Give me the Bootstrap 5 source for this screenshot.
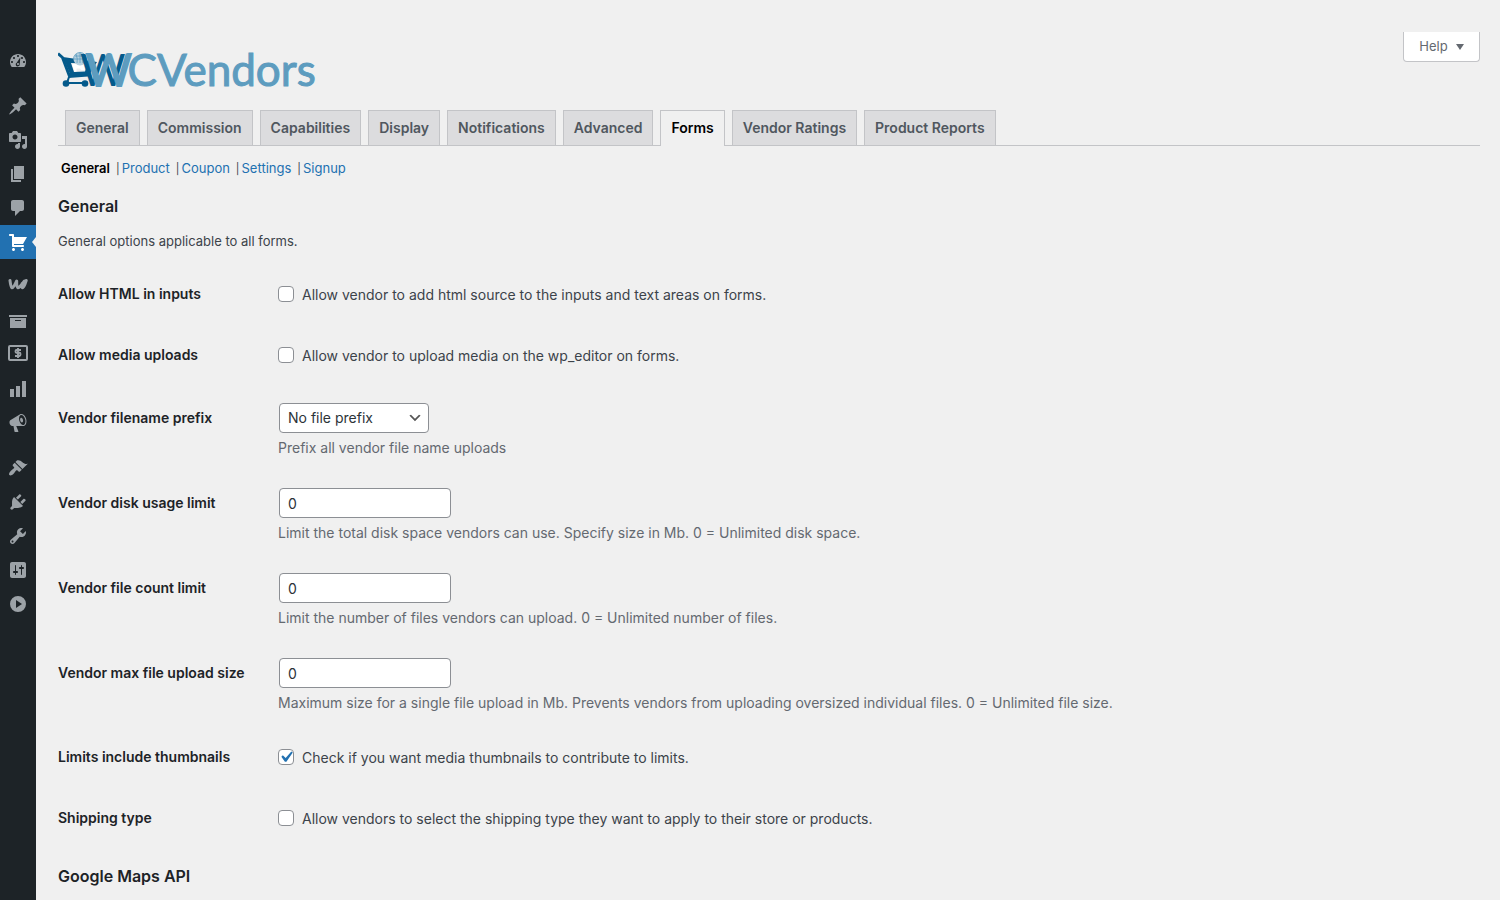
<!DOCTYPE html>
<html lang="en">
<head>
<meta charset="utf-8">
<meta name="viewport" content="width=device-width, initial-scale=1">
<title>WC Vendors Settings</title>
<link href="https://cdn.jsdelivr.net/npm/bootstrap@5.3.0/dist/css/bootstrap.min.css" rel="stylesheet">
<style>
body{background:#f0f0f0;color:#3c434a;font-family:Inter,"Liberation Sans",sans-serif;font-size:14px;line-height:20px}
a{color:#2271b1}
.admin-menu{width:36px;background:#1d2327;padding-top:44px}
.admin-menu a{height:34px;color:#9ca2a7;padding-right:1px}
.admin-menu a.active{background:#2271b1;color:#fff}
.admin-menu a.active::after{content:"";position:absolute;right:0;top:12px;border:5px solid transparent;border-left-width:0;border-right:4px solid #f0f0f0}
.admin-menu svg{width:20px;height:20px;fill:currentColor}
.menu-gap{margin-top:11px}
.page-body{padding:32px 20px 0 22px}
.help-tab{height:30px;width:77px;background:#fff;border:1px solid #c3c4c7;border-top:0;border-radius:0 0 4px 4px;color:#646970;font-size:13px;padding:0}
.brand-logo{margin-top:10px;font-family:Lato,sans-serif;font-size:44px;line-height:54px;color:#5d9cbf;-webkit-text-stroke:1px #5d9cbf}
.brand-logo svg{width:42px;height:40px;margin:8px -14px 0 0}
.brand-logo .brand-w{margin-right:-4px;-webkit-text-stroke-width:2px;text-shadow:-6px 0 #045a8b}
.settings-tabs{border-bottom:1px solid #c3c4c7;padding-left:7px;gap:7px;margin-top:14px}
.settings-tabs .nav-link{border:1px solid #c3c4c7;border-bottom:0;border-radius:0;background:#dcdcde;color:#50575e;font-weight:600;font-size:14px;line-height:24px;height:35px;padding:5px 10px}
.settings-tabs .nav-link.active{background:#f0f0f0;color:#000;height:36px;margin-bottom:-1px}
.sub-links{font-size:13px;margin-top:12px;padding-left:3px;gap:6px}
.sub-links a{text-decoration:none}
.sub-links .current{color:#000;font-weight:600}
.sub-links .divider{font-size:11px;margin-right:2px}
.section-title{font-size:16px;line-height:22px;font-weight:600;color:#1d2327;margin:16px 0 0}
.intro{font-size:13px;margin:14px 0 0}
.form-rows{margin-top:13px}
.form-row{display:grid;grid-template-columns:220px 1fr;align-items:start}
.form-row > :first-child{font-weight:600;color:#1d2327}
.check-row{height:61px;padding-top:20px}
.check-row label{padding-top:1px}
.field-group{padding-bottom:1px}
.field-row{height:85px;padding-top:17px}
.field-row > :first-child{padding-top:5px}
.form-check-input.wp-check{width:16px;height:16px;margin:2px 0 0;border:1px solid #8c8f94;border-radius:4px;background-color:#fff;float:none}
.form-check-input.wp-check:checked{background-color:#fff;border-color:#8c8f94;background-image:url("data:image/svg+xml,%3Csvg xmlns='http://www.w3.org/2000/svg' viewBox='0 0 20 20'%3E%3Cpath d='M14.83 4.89l1.34.94-5.81 8.38H9.02L5.78 9.67l1.34-1.25 2.57 2.4z' fill='%232271b1'/%3E%3C/svg%3E");background-size:22px;background-position:center}
.wp-field{width:172px;height:30px;margin-left:1px;padding:0 8px;border:1px solid #8c8f94;border-radius:4px;background-color:#fff;color:#2c3338;font-size:14px;line-height:28px}
select.wp-field{width:150px;background-position:right 5px center;background-size:16px;background-image:url("data:image/svg+xml,%3Csvg xmlns='http://www.w3.org/2000/svg' viewBox='0 0 20 20'%3E%3Cpath d='M5 6l5 5 5-5 2 1-7 7-7-7 2-1z' fill='%23555'/%3E%3C/svg%3E")}
.hint{color:#646970;margin:5px 0 0}
</style>
</head>
<body>
<div class="d-flex min-vh-100">
<nav class="admin-menu flex-shrink-0" aria-label="Admin">
<a href="#" class="d-flex align-items-center justify-content-center" aria-label="Dashboard"><svg viewBox="0 0 20 20"><path d="M3.76 16h12.48c1.1-1.37 1.76-3.11 1.76-5 0-4.42-3.58-8-8-8s-8 3.58-8 8c0 1.89.66 3.63 1.76 5zM10 4c.55 0 1 .45 1 1s-.45 1-1 1-1-.45-1-1 .45-1 1-1zM6 6c.55 0 1 .45 1 1s-.45 1-1 1-1-.45-1-1 .45-1 1-1zm8 0c.55 0 1 .45 1 1s-.45 1-1 1-1-.45-1-1 .45-1 1-1zM12.400 6.300L11.700 13.200A2 2 0 1 1 8.700 11.700zM4 10c.55 0 1 .45 1 1s-.45 1-1 1-1-.45-1-1 .45-1 1-1zm12 0c.55 0 1 .45 1 1s-.45 1-1 1-1-.45-1-1 .45-1 1-1zm-5 3c0-.55-.45-1-1-1s-1 .45-1 1 .45 1 1 1 1-.45 1-1z" fill-rule="evenodd"/></svg></a>
<a href="#" class="menu-gap d-flex align-items-center justify-content-center" aria-label="Posts"><svg viewBox="0 0 20 20"><path d="M10.44 3.02l1.82-1.82 6.36 6.35-1.83 1.82c-1.05-.68-2.48-.57-3.41.36l-.75.75c-.92.93-1.04 2.35-.35 3.41l-1.83 1.82-2.41-2.41-2.8 2.79c-.42.42-3.38 2.71-3.8 2.29s1.86-3.39 2.28-3.81l2.79-2.79L4.1 9.36l1.83-1.82c1.05.69 2.48.57 3.4-.36l.75-.75c.93-.92 1.05-2.35.36-3.41z"/></svg></a>
<a href="#" class="d-flex align-items-center justify-content-center" aria-label="Media"><svg viewBox="0 0 20 20"><path d="M13 11V4c0-.55-.45-1-1-1h-1.67L9 1H5L3.67 3H2c-.55 0-1 .45-1 1v7c0 .55.45 1 1 1h10c.55 0 1-.45 1-1zM7 4.5c1.38 0 2.5 1.12 2.5 2.5S8.38 9.5 7 9.5 4.5 8.38 4.5 7 5.62 4.5 7 4.5zM14 6h5v10.5c0 1.38-1.12 2.5-2.5 2.5S14 17.88 14 16.5s1.12-2.5 2.5-2.5c.17 0 .34.02.5.05V9h-3V6zm-4 8.05V13h2v3.5c0 1.38-1.12 2.5-2.5 2.5S7 17.88 7 16.5 8.12 14 9.5 14c.17 0 .34.02.5.05z" fill-rule="evenodd"/></svg></a>
<a href="#" class="d-flex align-items-center justify-content-center" aria-label="Pages"><svg viewBox="0 0 20 20"><path d="M6 15V2h10v13H6zm-1 1h8v2H3V5h2v11z"/></svg></a>
<a href="#" class="d-flex align-items-center justify-content-center" aria-label="Comments"><svg viewBox="0 0 20 20"><path d="M5 2h9c1.1 0 2 .9 2 2v7c0 1.1-.9 2-2 2h-2l-5 5v-5H5c-1.1 0-2-.9-2-2V4c0-1.1.9-2 2-2z"/></svg></a>
<a href="#" class="active position-relative d-flex align-items-center justify-content-center" aria-label="WC Vendors"><svg viewBox="0 0 20 20"><path d="M6 13h9c.55 0 1 .45 1 1s-.45 1-1 1H5c-.55 0-1-.45-1-1V4H2c-.55 0-1-.45-1-1s.45-1 1-1h3c.55 0 1 .45 1 1v2h13l-4 7H6v1zm-.5 3c.83 0 1.5.67 1.5 1.5S6.33 19 5.5 19 4 18.33 4 17.5 4.67 16 5.5 16zm9 0c.83 0 1.5.67 1.5 1.5s-.67 1.5-1.5 1.5-1.5-.67-1.5-1.5.67-1.5 1.5-1.5z"/></svg></a>
<a href="#" class="menu-gap d-flex align-items-center justify-content-center" aria-label="WooCommerce"><svg viewBox="0 0 20 20"><path d="M2 3.500Q2.800 10 4 10.800Q5.500 10.800 8.700 4Q8.600 10.300 10 10.800Q11.800 10.500 16.500 4M14.200 6.500Q13.200 10.300 14.500 10.800Q16 10.800 18.200 3.500" fill="none" stroke="currentColor" stroke-width="3" stroke-linejoin="round" stroke-linecap="round"/></svg></a>
<a href="#" class="d-flex align-items-center justify-content-center" aria-label="Products"><svg viewBox="0 0 20 20"><path d="M19 4v2H1V4h18zM2 7h16v10H2V7zm11 3V9H7v1h6z" fill-rule="evenodd"/></svg></a>
<a href="#" class="d-flex align-items-center justify-content-center" aria-label="Payments"><svg viewBox="0 0 20 20"><rect x="1" y="1" width="18" height="14" rx="1" fill="none" stroke="currentColor" stroke-width="2"/><path d="M13 5H8.500Q7.500 5 7.500 6.300T8.500 7.800H11.500Q12.500 7.800 12.500 9.300T11.500 11H7M10 3V13" fill="none" stroke="currentColor" stroke-width="1.900"/></svg></a>
<a href="#" class="d-flex align-items-center justify-content-center" aria-label="Analytics"><svg viewBox="0 0 20 20"><path d="M18 18V2h-4v16h4zm-6 0V7H8v11h4zm-6 0v-8H2v8h4z"/></svg></a>
<a href="#" class="d-flex align-items-center justify-content-center" aria-label="Marketing"><svg viewBox="0 0 20 20"><path d="M18.150 5.940c.46 1.620.38 3.220-.02 4.480-.42 1.280-1.260 2.180-2.300 2.480-.16.060-.26.060-.4.060-.06.020-.12.020-.18.020-.06.020-.14.020-.22.020h-6.800l2.220 5.500c.02.140-.06.260-.14.340-.08.100-.24.160-.34.160H6.950c-.1 0-.26-.06-.34-.16-.08-.08-.16-.2-.14-.34l-1-5.500H4.250l-.02-.02c-.5.060-1.080-.18-1.540-.62s-.88-1.080-1.060-1.880c-.24-.8-.2-1.560-.02-2.200.18-.62.580-1.080 1.060-1.300l.02-.02 9-5.400c.1-.06.180-.1.240-.16.060-.04.140-.08.240-.12.160-.08.280-.12.500-.18 1.040-.3 2.240.1 3.220.98s1.840 2.240 2.260 3.860zm-2.580 5.980h-.02c.4-.1.740-.34 1.040-.7.580-.7.860-1.760.86-3.040 0-.64-.1-1.300-.28-1.980-.34-1.360-1.020-2.500-1.780-3.240s-1.680-1.100-2.460-.88c-.82.220-1.400.96-1.700 2-.32 1.040-.28 2.360.06 3.720.38 1.360 1 2.500 1.800 3.240.78.740 1.620 1.100 2.480.88zm-2.540-7.080c.22-.04.420-.02.620.04.380.16.760.480 1.020 1s.42 1.200.42 1.780c0 .3-.04.560-.12.800-.18.480-.44.840-.86.940-.34.1-.8-.06-1.140-.4s-.64-.86-.78-1.500c-.18-.62-.12-1.240.02-1.720s.48-.84.82-.94z" fill-rule="evenodd"/></svg></a>
<a href="#" class="menu-gap d-flex align-items-center justify-content-center" aria-label="Appearance"><svg viewBox="0 0 20 20"><path d="M14.480 11.060L7.410 3.990l1.500-1.500c.5-.56 2.300-.47 3.510.32 1.210.8 1.430 1.280 2.910 2.100 1.180.64 2.450 1.260 4.450.85zm-.71.71L6.700 4.700 4.930 6.470c-.39.39-.39 1.020 0 1.410l1.060 1.060c.39.39.39 1.030 0 1.420-.6.6-1.430 1.110-2.210 1.690-.35.26-.7.53-1.010.84C1.430 14.230.4 16.080 1.400 17.070c.99 1 2.840-.03 4.180-1.360.31-.31.58-.66.85-1.020.57-.78 1.080-1.610 1.690-2.210.39-.39 1.020-.39 1.410 0l1.060 1.060c.39.39 1.020.39 1.410 0z"/></svg></a>
<a href="#" class="d-flex align-items-center justify-content-center" aria-label="Plugins"><svg viewBox="0 0 20 20"><path d="M13.110 4.360L9.870 7.600 8 5.730l3.240-3.240c.35-.34 1.050-.2 1.560.32.52.51.66 1.210.31 1.550zm-8 1.770l.91-1.120 9.010 9.010-1.190.84c-.71.71-2.630 1.160-3.820 1.160H6.140L4.900 17.260c-.59.59-1.540.59-2.120 0-.59-.58-.59-1.530 0-2.120l1.240-1.240v-3.880c0-1.130.4-3.190 1.090-3.890zm7.260 3.970l3.240-3.240c.34-.35 1.040-.21 1.550.31.52.51.66 1.210.31 1.550l-3.240 3.250z"/></svg></a>
<a href="#" class="d-flex align-items-center justify-content-center" aria-label="Tools"><svg viewBox="0 0 20 20"><path d="M16.680 9.770c-1.340 1.340-3.300 1.670-4.950.99l-5.410 6.520c-.99.99-2.590.99-3.580 0s-.99-2.590 0-3.570l6.520-5.420c-.68-1.650-.35-3.610.99-4.950 1.280-1.280 3.120-1.620 4.720-1.060l-2.890 2.890 2.820 2.820 2.860-2.870c.53 1.580.18 3.390-1.080 4.650zM3.810 16.210c.4.39 1.040.39 1.430 0 .4-.4.4-1.040 0-1.430-.39-.4-1.030-.4-1.430 0-.39.39-.39 1.030 0 1.430z" fill-rule="evenodd"/></svg></a>
<a href="#" class="d-flex align-items-center justify-content-center" aria-label="Settings"><svg viewBox="0 0 20 20"><path d="M18 16V4c0-1.100-.9-2-2-2H4c-1.100 0-2 .9-2 2v12c0 1.100.9 2 2 2h12c1.100 0 2-.9 2-2zM8 11h1c.55 0 1 .45 1 1s-.45 1-1 1H8v1.500c0 .28-.22.5-.5.5s-.5-.22-.5-.5V13H6c-.55 0-1-.45-1-1s.45-1 1-1h1V5.500c0-.28.22-.5.5-.5s.5.22.5.5V11zm5-2h-1c-.55 0-1-.45-1-1s.45-1 1-1h1V5.500c0-.28.22-.5.5-.5s.5.22.5.5V7h1c.55 0 1 .45 1 1s-.45 1-1 1h-1v5.500c0 .28-.22.5-.5.5s-.5-.22-.5-.5V9z" fill-rule="evenodd"/></svg></a>
<a href="#" class="d-flex align-items-center justify-content-center" aria-label="Expand menu"><svg viewBox="0 0 20 20"><path d="M10 2a8 8 0 1 0 0 16a8 8 0 0 0 0-16zM8 6l6 4-6 4z" fill-rule="evenodd"/></svg></a>
</nav>
<main class="page-body flex-grow-1">
<header class="d-flex justify-content-between align-items-start">
<div class="brand-logo d-flex align-items-start">
<svg viewBox="0 0 42 40" aria-hidden="true">
<path d="M0 3.500L4.500 7.500L12 27.500" fill="none" stroke="#045a8b" stroke-width="3"/>
<path fill-rule="evenodd" d="M5 7L39 12L30 26.500L10.500 28L12 24zM13 13L16 22L27 21.500L30 13.500z" fill="#045a8b"/>
<path d="M14 14H29L26.500 20H23L22 18.500H18.500V21.500H16.500z" fill="#fff"/>
<circle cx="22" cy="9" r="6.500" fill="#b5d0df"/>
<path d="M15.500 9a6.500 6.500 0 0 1 13 0M15.500 9H28.500M22 2.500V13M18 4Q20 9 19 13M26 4Q24 9 25 13M17 6H27" fill="none" stroke="#5d9cbf" stroke-width=".8"/>
<path d="M11 27L9 33H26" fill="none" stroke="#045a8b" stroke-width="2"/>
<circle cx="8" cy="33.500" r="3.300" fill="#045a8b"/><circle cx="27" cy="33.500" r="3.300" fill="#045a8b"/>
</svg>
<span><span class="brand-w">W</span>CVendors</span>
</div>
<button type="button" class="btn help-tab d-flex align-items-center justify-content-center gap-2">Help <svg width="8" height="6" viewBox="0 0 8 6" fill="currentColor" aria-hidden="true"><path d="M0 0h8L4 6z"/></svg></button>
</header>
<nav class="nav settings-tabs flex-nowrap" aria-label="Settings sections">
<a class="nav-link" href="#">General</a><a class="nav-link" href="#">Commission</a><a class="nav-link" href="#">Capabilities</a><a class="nav-link" href="#">Display</a><a class="nav-link" href="#">Notifications</a><a class="nav-link" href="#">Advanced</a><a class="nav-link active" aria-current="page" href="#">Forms</a><a class="nav-link" href="#">Vendor Ratings</a><a class="nav-link" href="#">Product Reports</a>
</nav>
<nav class="sub-links d-flex" aria-label="Form sections"><a class="current" href="#">General</a><span><span class="divider">|</span><a href="#">Product</a></span><span><span class="divider">|</span><a href="#">Coupon</a></span><span><span class="divider">|</span><a href="#">Settings</a></span><span><span class="divider">|</span><a href="#">Signup</a></span></nav>
<form>
<h2 class="section-title">General</h2>
<p class="intro">General options applicable to all forms.</p>
<div class="form-rows">
<div class="form-row check-row"><span>Allow HTML in inputs</span><div class="d-flex align-items-start gap-2"><input class="form-check-input wp-check" type="checkbox" id="html"><label for="html">Allow vendor to add html source to the inputs and text areas on forms.</label></div></div>
<div class="form-row check-row"><span>Allow media uploads</span><div class="d-flex align-items-start gap-2"><input class="form-check-input wp-check" type="checkbox" id="media"><label for="media">Allow vendor to upload media on the wp_editor on forms.</label></div></div>
<div class="field-group">
<div class="form-row field-row"><label for="prefix">Vendor filename prefix</label><div><select class="form-select wp-field" id="prefix"><option>No file prefix</option></select><p class="hint">Prefix all vendor file name uploads</p></div></div>
<div class="form-row field-row"><label for="disk">Vendor disk usage limit</label><div><input class="form-control wp-field" type="text" id="disk" value="0"><p class="hint">Limit the total disk space vendors can use. Specify size in Mb. 0 = Unlimited disk space.</p></div></div>
<div class="form-row field-row"><label for="count">Vendor file count limit</label><div><input class="form-control wp-field" type="text" id="count" value="0"><p class="hint">Limit the number of files vendors can upload. 0 = Unlimited number of files.</p></div></div>
<div class="form-row field-row"><label for="size">Vendor max file upload size</label><div><input class="form-control wp-field" type="text" id="size" value="0"><p class="hint">Maximum size for a single file upload in Mb. Prevents vendors from uploading oversized individual files. 0 = Unlimited file size.</p></div></div>
</div>
<div class="form-row check-row"><span>Limits include thumbnails</span><div class="d-flex align-items-start gap-2"><input class="form-check-input wp-check" type="checkbox" id="thumbs" checked><label for="thumbs">Check if you want media thumbnails to contribute to limits.</label></div></div>
<div class="form-row check-row"><span>Shipping type</span><div class="d-flex align-items-start gap-2"><input class="form-check-input wp-check" type="checkbox" id="ship"><label for="ship">Allow vendors to select the shipping type they want to apply to their store or products.</label></div></div>
</div>
<h2 class="section-title">Google Maps API</h2>
</form>
</main>
</div>
<script src="https://cdn.jsdelivr.net/npm/bootstrap@5.3.0/dist/js/bootstrap.bundle.min.js"></script>
</body>
</html>
